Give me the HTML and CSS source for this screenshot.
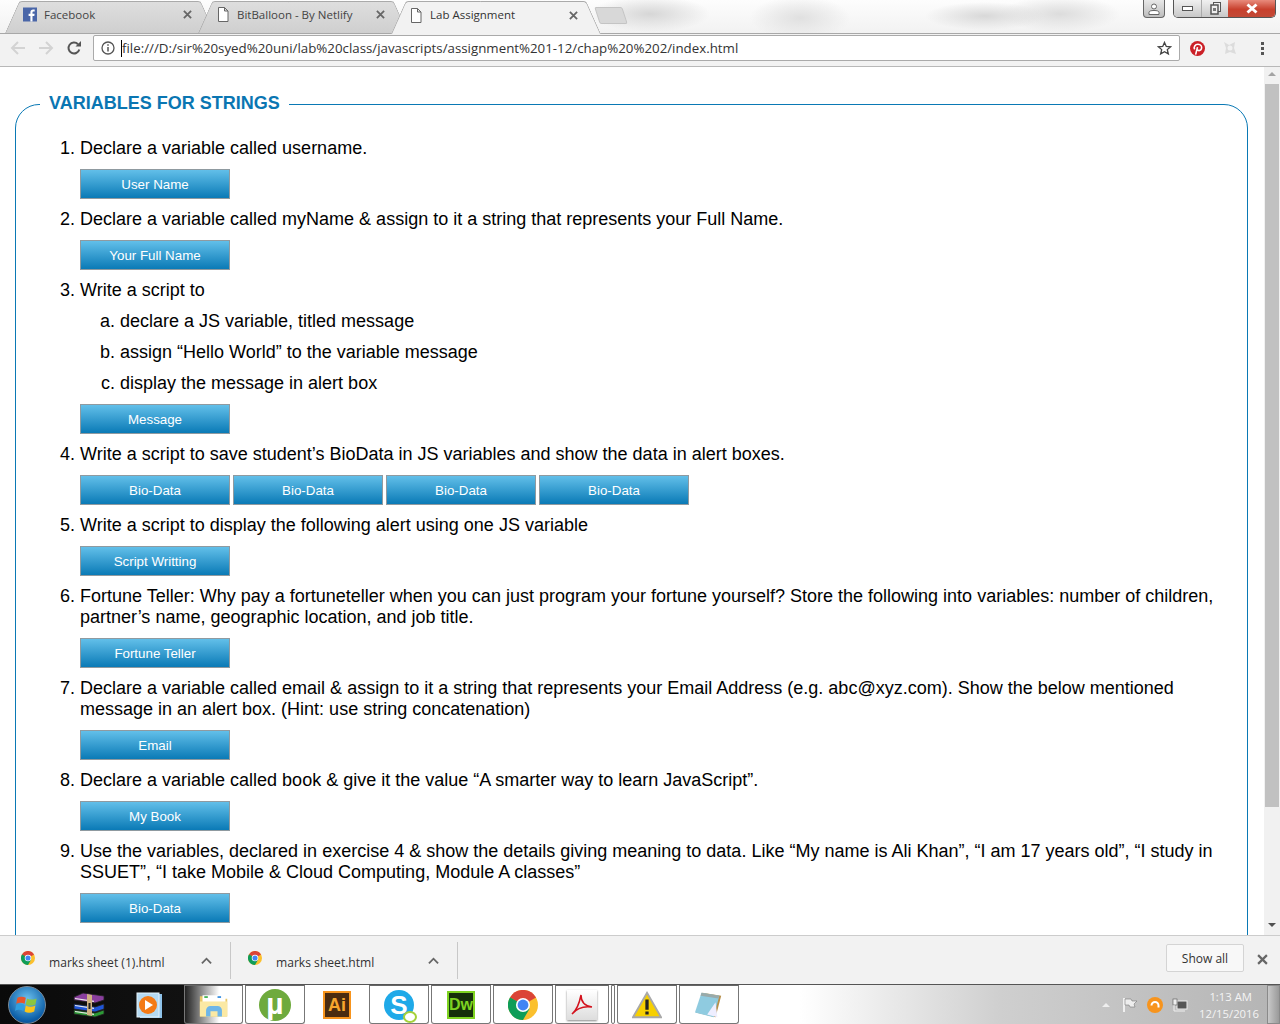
FILE: index.html
```html
<!DOCTYPE html>
<html lang="en">
<head>
<meta charset="utf-8">
<title>Lab Assignment</title>
<link rel="stylesheet" href="styles.css">
</head>
<body>
<svg class="defs" width="0" height="0" aria-hidden="true">
  <defs>
    <symbol id="page" viewBox="0 0 12 15"><path d="M1.5.5h6l3.5 3.5v10.500h-9.500zM7.500.5v3.500h3.500" fill="#fff" stroke="#666" stroke-width="1"/></symbol>
    <symbol id="chrome" viewBox="0 0 32 32">
      <circle cx="16" cy="16" r="16" fill="#fbc02d"/>
      <path d="M16 16L2.100 8A16 16 0 0 1 29.900 8z" fill="#db4437"/>
      <path d="M2.100 8A16 16 0 0 0 16 32l7-12-7-4z" fill="#0f9d58"/>
      <path d="M16 16L2.100 8 9 20z" fill="#0f9d58"/>
      <circle cx="16" cy="16" r="7.500" fill="#fff"/>
      <circle cx="16" cy="16" r="5.800" fill="#4285f4"/>
    </symbol>
    <symbol id="chev" viewBox="0 0 12 8"><path d="M1 6.500l5-5 5 5" fill="none" stroke="#666" stroke-width="2"/></symbol>
    <symbol id="cross" viewBox="0 0 10 10"><path d="M1 1l8 8M9 1l-8 8" stroke="#666" stroke-width="2" fill="none"/></symbol>
  </defs>
</svg>

<header class="tabstrip">
  <div class="tabs">
    <div class="tab">
      <svg class="favicon" viewBox="0 0 14 14"><rect width="14" height="14" fill="#4a66a8"/><path d="M9.500 14V8.500h1.800l.3-2.200H9.500V5c0-.7.200-1.100 1.100-1.100h1.100V2c-.3 0-.9-.1-1.600-.1-1.600 0-2.700 1-2.700 2.800v1.600H5.600v2.200h1.800V14z" fill="#fff"/></svg>
      <span class="tab-title">Facebook</span>
      <svg class="tab-x"><use href="#cross"/></svg>
    </div>
    <div class="tab">
      <svg class="favicon"><use href="#page"/></svg>
      <span class="tab-title">BitBalloon - By Netlify</span>
      <svg class="tab-x"><use href="#cross"/></svg>
    </div>
    <div class="tab tab-active">
      <svg class="favicon"><use href="#page"/></svg>
      <span class="tab-title">Lab Assignment</span>
      <svg class="tab-x"><use href="#cross"/></svg>
    </div>
    <div class="newtab"></div>
  </div>
  <div class="wincontrols">
    <div class="profile">
      <svg class="profile-icon" viewBox="0 0 12 12"><circle cx="6" cy="3.500" r="2.500" fill="#fff" stroke="#666"/><path d="M1 11.500V9.500c0-1.500 2-2 5-2s5 .5 5 2v2z" fill="#fff" stroke="#666"/></svg>
    </div>
    <div class="capbtns">
      <div class="cap cap-min"><span class="min-glyph"></span></div>
      <div class="cap cap-max"><svg class="max-glyph" viewBox="0 0 11 13"><rect x="3.500" y=".5" width="7" height="9" fill="#eee" stroke="#555"/><rect x="1" y="3" width="7" height="9" fill="#eee" stroke="#555" stroke-width="1.500"/><rect x="3" y="6" width="3" height="3" fill="#777"/></svg></div>
      <div class="cap cap-close"><svg class="close-glyph" viewBox="0 0 14 11"><path d="M2.500 1.500l9 8M11.500 1.500l-9 8" stroke="#fff" stroke-width="3" fill="none"/></svg></div>
    </div>
  </div>
</header>

<nav class="toolbar">
  <svg class="nav-icon" viewBox="0 0 16 16"><path d="M15 8H2M8 2L2 8l6 6" fill="none" stroke="#d3d3d3" stroke-width="2"/></svg>
  <svg class="nav-icon" viewBox="0 0 16 16"><path d="M1 8h13M8 2l6 6-6 6" fill="none" stroke="#d3d3d3" stroke-width="2"/></svg>
  <svg class="nav-icon" viewBox="0 0 16 16"><path d="M13.300 9.500A5.500 5.500 0 1 1 12 4.200" fill="none" stroke="#555" stroke-width="2"/><path d="M9.500 6.500h5.500V1z" fill="#555"/></svg>
  <div class="omnibox">
    <svg class="info-icon" viewBox="0 0 14 14"><circle cx="7" cy="7" r="6" fill="none" stroke="#555" stroke-width="1.300"/><path d="M7 6v4.500M7 3.200v1.600" stroke="#555" stroke-width="1.500"/></svg>
    <span class="caret"></span>
    <span class="url">file:///D:/sir%20syed%20uni/lab%20class/javascripts/assignment%201-12/chap%20%202/index.html</span>
    <svg class="star" viewBox="0 0 16 16"><path d="M8 1.500l1.900 4.300 4.600.4-3.500 3 1.100 4.600L8 11.400l-4.100 2.400L5 9.200l-3.500-3 4.600-.4z" fill="none" stroke="#444" stroke-width="1.400"/></svg>
  </div>
  <svg class="ext-pin" viewBox="0 0 16 16"><circle cx="8" cy="8" r="8" fill="#cb2027"/><path d="M6 14.500L8 6.500M5 9C3.500 6.500 5.500 3.500 8.500 3.500s4.500 2.300 3.700 4.700c-.7 2-3.200 2.800-4.300 1" fill="none" stroke="#fff" stroke-width="1.700"/></svg>
  <svg class="ext-grey" viewBox="0 0 16 16"><path d="M2 2l5 3 6-3-1 6 2 6-6-2-5 2 1-6z" fill="#dcdcdc"/><circle cx="8" cy="8" r="2.500" fill="#f2f2f2"/></svg>
  <div class="kebab"><span></span><span></span><span></span></div>
</nav>

<main class="viewport">
  <div class="page">
    <fieldset class="panel">
      <legend class="panel-title">VARIABLES FOR STRINGS</legend>
      <ol class="tasks">
        <li><p class="task">Declare a variable called username.</p>
          <div class="actions"><button class="btn">User Name</button></div></li>
        <li><p class="task">Declare a variable called myName &amp; assign to it a string that represents your Full Name.</p>
          <div class="actions"><button class="btn">Your Full Name</button></div></li>
        <li><p class="task">Write a script to</p>
          <ol class="sub">
            <li>declare a JS variable, titled message</li>
            <li>assign “Hello World” to the variable message</li>
            <li>display the message in alert box</li>
          </ol>
          <div class="actions"><button class="btn">Message</button></div></li>
        <li><p class="task">Write a script to save student’s BioData in JS variables and show the data in alert boxes.</p>
          <div class="actions"><button class="btn">Bio-Data</button><button class="btn">Bio-Data</button><button class="btn">Bio-Data</button><button class="btn">Bio-Data</button></div></li>
        <li><p class="task">Write a script to display the following alert using one JS variable</p>
          <div class="actions"><button class="btn">Script Writting</button></div></li>
        <li><p class="task">Fortune Teller: Why pay a fortuneteller when you can just program your fortune yourself? Store the following into variables: number of children, partner’s name, geographic location, and job title.</p>
          <div class="actions"><button class="btn">Fortune Teller</button></div></li>
        <li><p class="task">Declare a variable called email &amp; assign to it a string that represents your Email Address (e.g. abc@xyz.com). Show the below mentioned message in an alert box. (Hint: use string concatenation)</p>
          <div class="actions"><button class="btn">Email</button></div></li>
        <li><p class="task">Declare a variable called book &amp; give it the value “A smarter way to learn JavaScript”.</p>
          <div class="actions"><button class="btn">My Book</button></div></li>
        <li><p class="task">Use the variables, declared in exercise 4 &amp; show the details giving meaning to data. Like “My name is Ali Khan”, “I am 17 years old”, “I study in SSUET”, “I take Mobile &amp; Cloud Computing, Module A classes”</p>
          <div class="actions"><button class="btn">Bio-Data</button></div></li>
      </ol>
    </fieldset>
  </div>
  <div class="scrollbar">
    <span class="arrow-up"></span>
    <div class="thumb"></div>
    <span class="arrow-down"></span>
  </div>
</main>

<section class="downloads">
  <div class="dl-item">
    <svg class="dl-icon"><use href="#chrome"/></svg>
    <span class="dl-name">marks sheet (1).html</span>
    <svg class="dl-chev"><use href="#chev"/></svg>
  </div>
  <div class="dl-item dl-item-2">
    <svg class="dl-icon"><use href="#chrome"/></svg>
    <span class="dl-name">marks sheet.html</span>
    <svg class="dl-chev"><use href="#chev"/></svg>
  </div>
  <button class="showall">Show all</button>
  <svg class="dl-close"><use href="#cross"/></svg>
</section>

<footer class="taskbar">
  <div class="orb"><svg class="orb-flag" viewBox="0 0 20 20">
    <path d="M2 4c3-1.500 5-1 7 0l-1 5c-2-1-4-1.500-7 0z" fill="#e8552b"/>
    <path d="M10 4.500c2.500 1.300 5 1.300 8 0l-1 5c-3 1.300-5.500 1.300-8 0z" fill="#8cc63f"/>
    <path d="M1 10c3-1.500 5-1 7 0l-1 5c-2-1-4-1.500-7 0z" fill="#2f9fe0"/>
    <path d="M9 10.500c2.500 1.300 5 1.300 8 0l-1 5c-3 1.300-5.500 1.300-8 0z" fill="#fcc418"/>
  </svg></div>
  <div class="pin pin-rar"><svg class="icon-rar" viewBox="0 0 32 26">
    <path d="M1 5l9-4 21 3v4l-9 3-21-3z" fill="#8a3f9e" stroke="#222" stroke-width=".8"/>
    <path d="M1 12l21 3 9-3v5l-9 3-21-3z" fill="#1f55d8" stroke="#222" stroke-width=".8"/>
    <path d="M1 18l21 3 9-3v4l-9 3-21-3z" fill="#2c9a35" stroke="#222" stroke-width=".8"/>
    <path d="M2 6.500l19 2.800M2 13.500l19 2.800M2 19.500l19 2.800" stroke="#e8e8e8" stroke-width="1.200"/>
    <path d="M14 2l5 1v21l-5-1z" fill="#cfb183"/><rect x="15.500" y="11" width="2" height="6" fill="#222"/>
  </svg></div>
  <div class="pin pin-wmp"><svg class="icon-30" viewBox="0 0 30 30">
    <rect x="6" y="4" width="22" height="24" fill="#8fc3ea"/><rect x="3" y="3" width="22" height="24" fill="#b5daf3" stroke="#e8f3fb"/>
    <circle cx="14" cy="15" r="9" fill="#f47a16"/><path d="M11 10l8 5-8 5z" fill="#fff"/>
  </svg></div>
  <div class="pin pin-open pin-folder"><svg class="icon-30" viewBox="0 0 34 30">
    <path d="M1 5h11l2 3h18v20H1z" fill="#e8c766"/><rect x="4" y="4" width="26" height="8" fill="#fff"/><rect x="6" y="5" width="4" height="2" fill="#3fb04f"/><rect x="21" y="5" width="4" height="2" fill="#3a8fe0"/>
    <path d="M1 11h31v17H1z" fill="#fbe9a4"/><path d="M8 21a5 5 0 0 1 5-5h8a5 5 0 0 1 5 5v7h-5v-6h-8v6H8z" fill="#6fb6e8"/>
  </svg></div>
  <div class="pin pin-open"><div class="ut">µ</div></div>
  <div class="pin pin-plain"><div class="ai">Ai</div></div>
  <div class="pin pin-open"><div class="skype">S<span class="skype-dot"></span></div></div>
  <div class="pin pin-open"><div class="dw">Dw</div></div>
  <div class="pin pin-open"><svg class="icon-30"><use href="#chrome"/></svg></div>
  <div class="pin pin-open pin-pdf"><div class="pdf"><svg class="pdf-glyph" viewBox="0 0 24 24"><path d="M2 21c4-3 7-9 9-19 0 7 4 11 11 12-7-1-15 1-20 7z" fill="none" stroke="#d3121d" stroke-width="1.500"/></svg></div></div>
  <div class="pin pin-sliver"></div>
  <div class="pin pin-open"><svg class="icon-30" viewBox="0 0 32 30"><path d="M16 2L31 28H1z" fill="#f7d000" stroke="#a9a9a9" stroke-width="2"/><path d="M16 9v11M16 22v3" stroke="#222" stroke-width="3.500"/></svg></div>
  <div class="pin pin-open"><svg class="icon-30" viewBox="0 0 32 30"><path d="M9 2l20 3-6 23-21-5z" fill="#b88f4a"/><path d="M8 2l19 3-6 23-20-5z" fill="#8fcbe0"/><path d="M8 2l19 3-1 3-19-3z" fill="#9aa"/><path d="M14 25l9-13 2 16z" fill="#eef"/></svg></div>
  <div class="tray">
    <span class="tray-up"></span>
    <svg class="tray-flag" viewBox="0 0 16 16"><path d="M2 1v14" stroke="#fff" stroke-width="1.500"/><path d="M3 2h6l1 2h5l-3 3 1 3H8L7 8H3z" fill="#eee" stroke="#666" stroke-width=".5"/></svg>
    <svg class="tray-avast" viewBox="0 0 16 16"><circle cx="8" cy="8" r="8" fill="#f7941d"/><path d="M4.500 8.500a3.500 3.500 0 1 1 7 0v2" fill="none" stroke="#fff" stroke-width="2"/></svg>
    <svg class="tray-net" viewBox="0 0 16 16"><rect x="5" y="4" width="10" height="8" fill="#555" stroke="#eee"/><rect x="1" y="2" width="4" height="6" fill="#eee" stroke="#555" stroke-width=".6"/><path d="M2 8v6h11" fill="none" stroke="#eee"/></svg>
    <div class="clock"><span>1:13 AM</span><span>12/15/2016</span></div>
    <div class="show-desktop"></div>
  </div>
</footer>
</body>
</html>
```
FILE: styles.css
```css
* { box-sizing: border-box; }
html, body { margin: 0; height: 100%; overflow: hidden; }
body {
  width: 1280px; height: 1024px;
  display: flex; flex-direction: column;
  font-family: "Liberation Sans", Arial, sans-serif;
  background: #fff; color: #000;
}
.defs { position: absolute; }

/* Tab strip */
.tabstrip {
  flex: 0 0 33px; display: flex; justify-content: space-between; align-items: flex-start;
  border-bottom: 1px solid #a8a8a8;
  background:
    radial-gradient(ellipse 60px 18px at 650px 14px, #d6d6d6, transparent),
    radial-gradient(ellipse 50px 22px at 800px 18px, #e0e0e0, transparent),
    radial-gradient(ellipse 60px 14px at 985px 16px, #d8d8d8, transparent),
    radial-gradient(ellipse 60px 18px at 1060px 14px, #dcdcdc, transparent),
    linear-gradient(#fdfdfd, #f2f2f2);
}
.tabs { display: flex; padding-left: 5px; height: 33px; }
.tab {
  position: relative; width: 210px; height: 33px; margin-right: -17px;
  padding-left: 18px; padding-right: 23px; display: flex; align-items: center;
  font: 11.500px "Open Sans", sans-serif; color: #444;
}
.tab::before, .tab::after {
  content: ""; position: absolute; top: 1px; bottom: 0; width: 50%;
  background: linear-gradient(#dedede, #cfcfcf);
  border-top: 1px solid #aaa;
}
.tab::before { left: 0; transform: skewX(-24deg); transform-origin: bottom left; border-left: 1px solid #aaa; border-top-left-radius: 3px; }
.tab::after { right: 0; transform: skewX(24deg); transform-origin: bottom right; border-right: 1px solid #aaa; border-top-right-radius: 3px; }
.tab-active { color: #333; height: 34px; z-index: 2; }
.tab-active::before, .tab-active::after { background: #f2f2f2; }
.favicon { position: relative; z-index: 1; width: 14px; height: 15px; flex: none; margin-right: 7px; }
.tab-title { position: relative; z-index: 1; flex: 1; white-space: nowrap; overflow: hidden; margin-top: -5px; }
.favicon, .tab-x { margin-top: -4px; }
.tab-x { position: relative; z-index: 1; width: 9px; height: 9px; flex: none; }
.newtab {
  width: 28px; height: 17px; margin: 7px 0 0 13px; background: #d8d8d8; border: 1px solid #c4c4c4;
  border-radius: 2px; transform: skewX(18deg);
}
.wincontrols { display: flex; gap: 8px; padding-right: 4px; }
.profile {
  width: 22px; height: 18px; display: flex; align-items: center; justify-content: center;
  background: linear-gradient(#e8e8e8, #bdbdbd); border: 1px solid #666; border-top: 0; border-radius: 0 0 4px 4px;
}
.profile-icon { width: 12px; height: 12px; }
.capbtns { display: flex; height: 18px; border: 1px solid #555; border-top: 0; border-radius: 0 0 5px 5px; overflow: hidden; }
.cap { display: flex; align-items: center; justify-content: center; }
.cap-min { width: 28px; background: linear-gradient(#f0f0f0, #c8c8c8); border-right: 1px solid #aaa; }
.cap-max { width: 26px; background: linear-gradient(#f0f0f0, #c8c8c8); }
.cap-close { width: 47px; background: linear-gradient(#e88b7c 0, #c8402d 55%, #c24a37); }
.min-glyph { width: 11px; height: 5px; background: #fff; border: 1px solid #555; }
.max-glyph { width: 11px; height: 13px; }
.close-glyph { width: 14px; height: 11px; }

/* Toolbar */
.toolbar {
  flex: 0 0 33px; display: flex; align-items: center; padding: 1px 0 5px 10px;
  background: #f2f2f2; border-bottom: 1px solid #b8b8b8;
}
.nav-icon { width: 16px; height: 16px; margin-right: 12px; flex: none; }
.omnibox {
  width: 1087px; height: 26px; margin-left: -1px; display: flex; align-items: center; padding: 0 7px;
  background: #fff; border: 1px solid #aaa; border-radius: 2px; flex: none;
}
.info-icon { width: 14px; height: 14px; flex: none; margin-right: 6px; }
.caret { width: 1px; height: 17px; background: #000; flex: none; }
.url { flex: 1; font: 13.300px/18px "Open Sans", sans-serif; color: #333; white-space: nowrap; }
.star { width: 15px; height: 15px; flex: none; }
.ext-pin { width: 15px; height: 15px; margin-left: 10px; flex: none; }
.ext-grey { width: 16px; height: 16px; margin-left: 17px; flex: none; }
.kebab { margin-left: 23px; display: flex; flex-direction: column; gap: 2px; }
.kebab span { width: 3px; height: 3px; background: #555; }

/* Page */
.viewport { flex: 1; min-height: 0; display: flex; overflow: hidden; }
.page { flex: 1; min-width: 0; padding: 26px 16px 0 15px; }
.panel {
  margin: 0; padding: 22px 24px 40px; min-width: 0;
  border: 1px solid #0a79b5; border-radius: 24px;
}
.panel-title {
  margin-left: 0; padding: 0 9px 2px; font: bold 18px/21px "Liberation Sans", Arial, sans-serif; color: #0a76b2;
}
.tasks, .sub { margin: 0; padding-left: 40px; font-size: 18px; line-height: 21px; }
.sub { list-style: lower-alpha; padding-left: 40px; }
.sub li { margin-bottom: 10px; }
.task { margin: 0 0 10px; }
.actions { display: flex; gap: 3px; margin-bottom: 10px; }
.btn {
  width: 150px; height: 30px; padding: 0; flex: none;
  font: 13.333px "Liberation Sans", Arial, sans-serif; color: #fff;
  background: linear-gradient(#62bfe9, #0a7ab6);
  border: 1px solid #8f9aa0;
}

/* Scrollbar */
.scrollbar { flex: 0 0 16px; position: relative; background: #f1f1f1; display: flex; flex-direction: column; align-items: center; }
.arrow-up { margin-top: 5px; border: 4px solid transparent; border-top: 0; border-bottom: 4px solid #a3a3a3; }
.thumb { width: 14px; height: 723px; margin-top: 8px; background: #c1c1c1; }
.arrow-down { margin-top: 116px; border: 4px solid transparent; border-bottom: 0; border-top: 4px solid #505050; }

/* Downloads */
.downloads {
  flex: 0 0 49px; display: flex; align-items: center; position: relative;
  background: #f2f2f2; border-top: 1px solid #ccc;
}
.dl-item {
  width: 231px; height: 37px; display: flex; align-items: center; padding-left: 21px;
  border-right: 1px solid #c8c8c8; margin-top: 1px;
}
.dl-item-2 { width: 227px; padding-left: 17px; }
.dl-icon { width: 14px; height: 14px; flex: none; margin-right: 14px; margin-top: -6px; }
.dl-name { flex: 1; font: 12.100px "Open Sans", sans-serif; color: #333; white-space: nowrap; margin-top: 3px; }
.dl-chev { width: 11px; height: 8px; margin-right: 18px; flex: none; }
.showall {
  margin-left: auto; width: 78px; height: 28px; padding: 0; margin-right: 13px; margin-top: -4px;
  font: 12px "Open Sans", sans-serif; color: #333; background: #f8f8f8; border: 1px solid #d4d4d4; border-radius: 2px;
}
.dl-close { width: 11px; height: 11px; margin-right: 12px; margin-top: -2px; flex: none; }

/* Taskbar */
.taskbar {
  flex: 0 0 40px; display: flex; align-items: stretch; overflow: hidden;
  background: linear-gradient(90deg, #0a0a0a 0, #111 184px, #fff 200px, #fff 800px, #cfcfcf 1000px, #b4b4b4 1280px);
  border-top: 1px solid #555;
}
.orb {
  width: 38px; height: 38px; margin: 0 8px; border-radius: 50%; align-self: center; flex: none;
  display: flex; align-items: center; justify-content: center;
  background: radial-gradient(circle at 50% 35%, #6fc3ee, #0d5fa8 70%, #0b3b72);
  border: 1px solid #7a8a98;
}
.orb-flag { width: 24px; height: 24px; }
.pin {
  flex: none; width: 60px; margin-right: 2px; display: flex; align-items: center; justify-content: center;
}
.pin-rar { width: 70px; margin-right: 0; }
.pin-wmp { width: 50px; margin-right: 10px; }
.pin-open { border: 1px solid #777; border-top: 1px solid #666; border-radius: 0 0 3px 3px; background: #fff; }
.pin-folder { width: 59px; background: linear-gradient(90deg, #222, #fff 60%); }
.pin-pdf { width: 54px; }
.pin-sliver { width: 4px; border: 1px solid #777; border-radius: 0 0 3px 3px; background: #fff; }
.icon-30 { width: 30px; height: 30px; }
.icon-rar { width: 32px; height: 26px; }
.ut {
  width: 32px; height: 32px; border-radius: 50%; background: #6eaa3d; color: #fff;
  font: bold 30px/30px "Liberation Sans", sans-serif; text-align: center;
}
.ai {
  width: 28px; height: 28px; background: #4a2b10; border: 2px solid #f7941d; color: #f7a52d;
  font: bold 18px/24px "Liberation Sans", sans-serif; text-align: center;
}
.skype {
  position: relative; width: 30px; height: 30px; border-radius: 50%; background: #1fa9e8; color: #fff;
  font: bold 26px/30px "Liberation Sans", sans-serif; text-align: center;
}
.skype-dot {
  position: absolute; right: -3px; bottom: -3px; width: 14px; height: 12px; border-radius: 50%;
  background: #fff; border: 2px solid #a5d13a;
}
.dw {
  width: 28px; height: 28px; background: #16300a; border: 2px solid #7ed321; color: #7ed321;
  font: bold 16px/24px "Liberation Sans", sans-serif; text-align: center;
}
.pdf {
  width: 30px; height: 30px; display: flex; align-items: center; justify-content: center;
  background: linear-gradient(#fff, #ddd); box-shadow: 0 1px 2px #888;
}
.pdf-glyph { width: 24px; height: 24px; }
.tray { margin-left: auto; display: flex; align-items: center; }
.tray-up { width: 0; border: 4px solid transparent; border-top: 0; border-bottom: 4px solid #eee; margin-right: 12px; }
.tray-flag { width: 16px; height: 16px; margin-right: 9px; }
.tray-avast { width: 16px; height: 16px; margin-right: 9px; }
.tray-net { width: 16px; height: 16px; margin-right: 7px; }
.clock {
  display: flex; flex-direction: column; align-items: flex-end; width: 64px; margin-right: 8px;
  font: 11.300px/17px "Open Sans", sans-serif; color: #f4f4f4;
}
.clock span:first-child { padding-right: 7px; }
.show-desktop {
  width: 13px; height: 39px; border: 1px solid #8a8a8a; background: linear-gradient(90deg, #c8c8c8, #9a9a9a);
}
```
